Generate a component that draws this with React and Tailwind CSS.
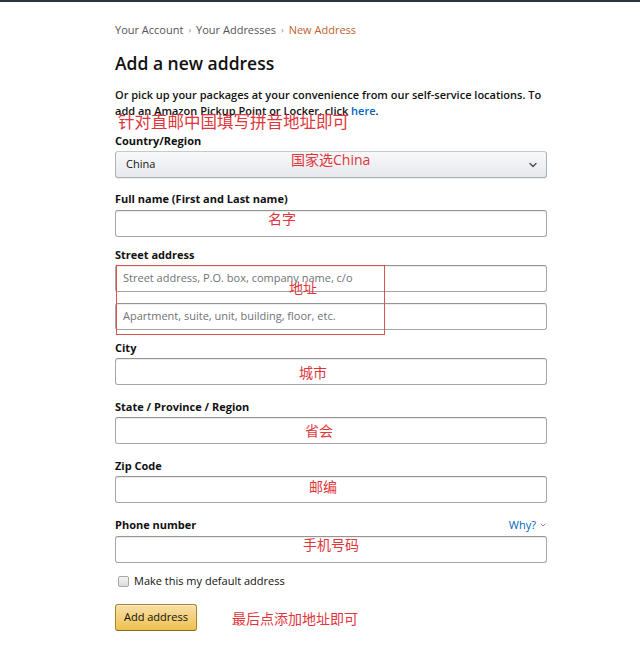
import { ChevronDown } from "lucide-react";

const RED = "text-[#e0353b]";

const Label = ({ children, className = "" }) => (
  <div className={`text-[11px] leading-[14px] font-bold text-[#111] ${className}`}>
    {children}
  </div>
);

const Field = ({ placeholder, note, noteLeft, noteTop = 0, className = "" }) => (
  <div
    className={`relative h-[27px] w-full rounded-[3px] border border-[#a6a6a6] border-t-[#949494] bg-white shadow-[inset_0_1px_0_rgba(0,0,0,0.07)] flex items-center px-[7px] ${className}`}
  >
    {placeholder && (
      <span className="text-[11px] text-[#6f7373]">{placeholder}</span>
    )}
    {note && (
      <span
        className={`absolute text-[14px] leading-[16px] ${RED}`}
        style={{ left: noteLeft, top: noteTop }}
      >
        {note}
      </span>
    )}
  </div>
);

export default function App() {
  return (
    <div
      className="w-[640px] h-[660px] bg-white overflow-hidden"
      style={{ fontFamily: '"Open Sans", "Noto Sans CJK SC", sans-serif' }}
    >
      <div className="h-[2px] bg-[#2b3541]" />

      <div className="pl-[115px] w-[547px]">
        <div className="mt-[21px] flex items-center text-[11px] leading-[14px] text-[#555]">
          <span>Your Account</span>
          <span className="mx-[5px] text-[9px] text-[#888]">›</span>
          <span>Your Addresses</span>
          <span className="mx-[5px] text-[9px] text-[#888]">›</span>
          <span className="text-[#c0602f]">New Address</span>
        </div>

        <h1 className="mt-[14px] text-[17.5px] leading-[24px] font-semibold text-[#111]">
          Add a new address
        </h1>

        <div className="relative mt-[12px]">
          <p className="text-[11px] leading-[16px] font-semibold text-[#111]">
            Or pick up your packages at your convenience from our self-service
            locations. To add an Amazon Pickup Point or Locker, click{" "}
            <span className="text-[#0066c0]">here</span>.
          </p>
          <span
            className={`absolute left-[3px] top-[25px] text-[16.5px] leading-[20px] ${RED}`}
          >
            针对直邮中国填写拼音地址即可
          </span>
        </div>

        <Label className="mt-[15px] mb-[3px]">Country/Region</Label>
        <div className="relative h-[27px] w-full rounded-[3px] border border-[#adb1b8] border-t-[#c5c8cd] bg-gradient-to-b from-[#f7f8fa] to-[#e7e9ec] shadow-[0_1px_0_rgba(0,0,0,0.08)] flex items-center justify-between pl-[10px] pr-[7px]">
          <span className="text-[11px] text-[#111]">China</span>
          <span
            className={`absolute left-[175px] top-0 text-[14px] leading-[16px] ${RED}`}
          >
            国家选China
          </span>
          <ChevronDown size={12} strokeWidth={3} className="text-[#555]" />
        </div>

        <Label className="mt-[14px] mb-[4px]">Full name (First and Last name)</Label>
        <Field note="名字" noteLeft={152} noteTop={0} />

        <Label className="mt-[11px] mb-[3px]">Street address</Label>
        <div className="relative">
          <Field placeholder="Street address, P.O. box, company name, c/o" />
          <Field
            className="mt-[11px]"
            placeholder="Apartment, suite, unit, building, floor, etc."
          />
          <div className="absolute left-[1px] top-0 w-[269px] h-[70px] border border-[#d9534f]" />
          <span
            className={`absolute left-[174px] top-[15px] text-[14px] leading-[16px] ${RED}`}
          >
            地址
          </span>
        </div>

        <Label className="mt-[11px] mb-[3px]">City</Label>
        <Field note="城市" noteLeft={183} noteTop={6} />

        <Label className="mt-[15px] mb-[3px]">State / Province / Region</Label>
        <Field note="省会" noteLeft={189} noteTop={5} />

        <Label className="mt-[15px] mb-[3px]">Zip Code</Label>
        <Field note="邮编" noteLeft={193} noteTop={2} />

        <div className="mt-[15px] mb-[4px] flex items-center justify-between">
          <Label>Phone number</Label>
          <span className="flex items-center gap-[3px] text-[11px] leading-[14px] text-[#0066c0]">
            Why?
            <ChevronDown size={8} strokeWidth={3} className="text-[#888]" />
          </span>
        </div>
        <Field note="手机号码" noteLeft={187} noteTop={0} />

        <label className="mt-[11px] flex items-center gap-[5px] h-[14px]">
          <span className="ml-[3px] w-[11px] h-[11px] rounded-[2px] border border-[#a6a6a6] bg-gradient-to-b from-[#f4f4f4] to-[#dcdcdc]" />
          <span className="text-[11px] text-[#111]">Make this my default address</span>
        </label>

        <div className="mt-[16px] flex items-center">
          <button className="h-[27px] w-[82px] rounded-[3px] border border-[#a88734] border-b-[#846a29] bg-gradient-to-b from-[#f7dfa5] to-[#f0c14b] text-[11px] text-[#111] shadow-[inset_0_1px_0_rgba(255,255,255,0.4)]">
            Add address
          </button>
          <span className={`ml-[35px] mt-[2px] text-[14px] leading-[16px] ${RED}`}>
            最后点添加地址即可
          </span>
        </div>
      </div>
    </div>
  );
}
